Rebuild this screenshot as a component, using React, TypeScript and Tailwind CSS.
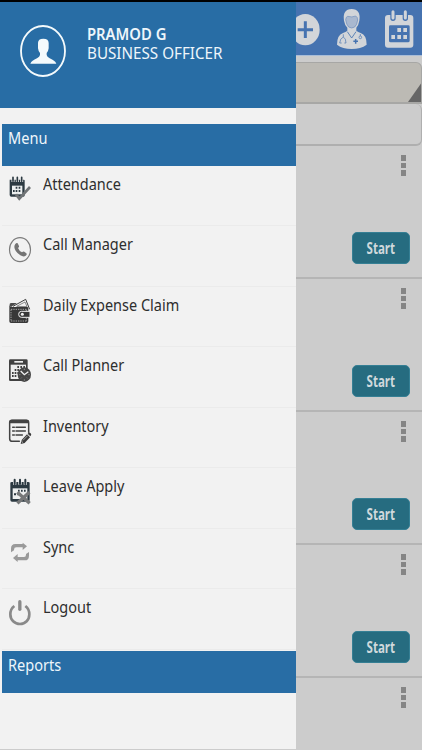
import type { ReactNode } from 'react';

interface MenuItem {
  label: string;
  icon: ReactNode;
}

function AttendanceIcon() {
  return (
    <svg viewBox="0 0 72 84" className="h-7 w-6 shrink-0">
      <path d="M5 14h42q3 0 3 3v44q0 4-4 4H10q-5 0-5-5z" fill="#2c3a42" />
      <path d="M12 32h31v26H12z" fill="#ecefef" />
      <path d="M23 35h5v6h-5zM32 35h5v6h-5zM15 45h5v6h-5zM23 45h5v6h-5zM32 45h5v6h-5z" fill="#2c3a42" />
      <path d="M15 8v13M28 8v13M41 8v13" stroke="#f2f2f2" strokeWidth="9" />
      <path d="M15 7v12M28 7v12M41 7v12" stroke="#2c3a42" strokeWidth="5" strokeLinecap="round" />
      <path d="M24 58l10 13L66 36" fill="none" stroke="#707476" strokeWidth="8" />
    </svg>
  );
}

function CallIcon() {
  return (
    <svg viewBox="0 0 72 84" className="h-7 w-6 shrink-0">
      <ellipse cx="36" cy="44" rx="31.500" ry="36" fill="none" stroke="#7b7b7b" strokeWidth="3.500" />
      <path
        d="M22 27q4-5 7-2l4 8q1 3-3 6 4 10 12 13 4-4 7-2l6 5q3 3-2 7-6 5-16-1Q20 50 19 36q0-6 3-9z"
        fill="#747474"
      />
    </svg>
  );
}

function WalletIcon() {
  return (
    <svg viewBox="0 0 72 84" className="h-7 w-6 shrink-0">
      <path d="M15 31L53 10l12 30" fill="none" stroke="#3f3f3f" strokeWidth="3" />
      <path d="M5 29V24q1-3 5-3h17L10 32z" fill="#4a4a4a" />
      <path d="M26 31l25-13 6 14z" fill="#f2f2f2" stroke="#555" strokeWidth="2" />
      <path d="M4 28q3 5 9 5h44q4 0 4 4v39q0 5-5 5H9q-5 0-5-5z" fill="#383838" />
      <path d="M9 40h46M9 75h46M9 41v34M55 41v7M55 66v9" fill="none" stroke="#d8d8d8" strokeWidth="2" strokeDasharray="4 3" />
      <path d="M66 46H40q-8 0-8 9t8 9h26z" fill="#383838" stroke="#f2f2f2" strokeWidth="3" />
      <circle cx="43" cy="55" r="4.500" fill="#f2f2f2" />
    </svg>
  );
}

function PlannerIcon() {
  return (
    <svg viewBox="0 0 72 84" className="h-7 w-6 shrink-0">
      <path d="M3 14q0-4 4-4h48q4 0 4 4v57q0 4-4 4H7q-4 0-4-4z" fill="#414141" />
      <path d="M8 26h46v43H8z" fill="#eee" />
      <path d="M19 15h26v5H19z" fill="#eee" />
      <path
        d="M28 30h5v6h-5zM37 30h5v6h-5zM46 30h5v6h-5zM20 39h5v6h-5zM28 39h5v6h-5zM37 39h5v6h-5zM12 48h5v6h-5zM20 48h5v6h-5zM28 48h5v6h-5zM12 57h5v6h-5zM20 57h5v6h-5z"
        fill="#414141"
      />
      <ellipse cx="49" cy="56" rx="20" ry="22" fill="#454545" />
      <path d="M38 45l11 11 12-9" fill="none" stroke="#f2f2f2" strokeWidth="4" />
      <path d="M49 38v4M49 70v4M34 56h3M61 56h4M39 67l2-2M59 67l-2-2" stroke="#bbb" strokeWidth="2" />
    </svg>
  );
}

function InventoryIcon() {
  return (
    <svg viewBox="0 0 72 84" className="h-7 w-6 shrink-0">
      <path
        d="M34 73H13q-8 0-8-8V17q0-7 7-7h43q7 0 7 7v29"
        fill="none"
        stroke="#434343"
        strokeWidth="4.500"
        strokeLinecap="round"
      />
      <path d="M4 19v-4q0-7 8-7h43q8 0 8 7v4z" fill="#434343" />
      <path d="M14 31h5M14 42h5M14 54h5M24 31h28M24 42h28M24 54h19" stroke="#434343" strokeWidth="4.500" strokeLinecap="round" />
      <path d="M41 69l16-17 9 9-16 17-12 3z" fill="#3c3c3c" />
      <path d="M59 50l3-3q3-2 6 2t1 6l-2 3z" fill="#3c3c3c" />
      <path d="M45 70l14-14" stroke="#ddd" strokeWidth="2" />
      <path d="M41 73l4 4" stroke="#f2f2f2" strokeWidth="2" />
    </svg>
  );
}

function LeaveIcon() {
  return (
    <svg viewBox="0 0 72 84" className="h-7 w-6 shrink-0">
      <path d="M7 18q0-3 4-3h50q4 0 4 3v51q0 5-5 5H12q-5 0-5-5z" fill="#2c3a42" />
      <path d="M14 34h44v32H14z" fill="#ecefef" />
      <path d="M30 38h5v6h-5zM39 38h5v6h-5zM48 38h5v6h-5zM18 49h6v6h-6zM28 49h6v6h-6z" fill="#2c3a42" />
      <path d="M20 8v15M36 8v15M52 8v15" stroke="#f2f2f2" strokeWidth="10" />
      <path d="M20 8v13M36 8v13M52 8v13" stroke="#2c3a42" strokeWidth="6" strokeLinecap="round" />
      <path d="M28 46l37 33M64 46L28 79" stroke="#767879" strokeWidth="10" />
    </svg>
  );
}

function SyncIcon() {
  return (
    <svg viewBox="0 0 72 84" className="h-7 w-6 shrink-0">
      <g fill="#9a9a9a">
        <path d="M9 43V32q0-14 13-14h22v-4l13 11-13 11v-8H25q-7 0-7 7v2z" />
        <path d="M63 42v11q0 14-13 14H29v5L15 60l14-12v9h19q6 0 6-7v-2z" />
      </g>
    </svg>
  );
}

function LogoutIcon() {
  return (
    <svg viewBox="0 0 72 84" className="h-7 w-6 shrink-0">
      <path d="M19 24Q7 33 7 49c0 17 13 29 29 29s28-12 28-29q0-16-12-25" fill="none" stroke="#8a8a8a" strokeWidth="8" />
      <path d="M35.500 11v23" stroke="#8a8a8a" strokeWidth="10" strokeLinecap="round" />
    </svg>
  );
}

const MENU: MenuItem[] = [
  { label: 'Attendance', icon: <AttendanceIcon /> },
  { label: 'Call Manager', icon: <CallIcon /> },
  { label: 'Daily Expense Claim', icon: <WalletIcon /> },
  { label: 'Call Planner', icon: <PlannerIcon /> },
  { label: 'Inventory', icon: <InventoryIcon /> },
  { label: 'Leave Apply', icon: <LeaveIcon /> },
  { label: 'Sync', icon: <SyncIcon /> },
  { label: 'Logout', icon: <LogoutIcon /> },
];

function SectionBar({ title }: { title: string }) {
  return (
    <div className="ml-[2px] h-[42px] shrink-0 bg-[#286da5] pl-[6px] pt-[3px] text-[16px] leading-[22px] text-[#eef6fb]">
      <span className="inline-block origin-left scale-x-[0.91]">{title}</span>
    </div>
  );
}

function Drawer() {
  return (
    <aside className="absolute left-0 top-0 flex h-[749px] w-[295.5px] flex-col bg-[#f2f2f2]">
      <div className="flex h-[107.5px] shrink-0 border-t-[2px] border-black bg-[#286da5] pl-5 text-[#eef6fb]">
        <svg viewBox="0 0 138 156" className="mt-[23px] h-[52px] w-[46px] shrink-0">
          <ellipse cx="69" cy="78" rx="66" ry="75" fill="none" stroke="#f4fafc" strokeWidth="5.500" />
          <path
            d="M54 54q0-13 16-13t16 13v16q-1 9-6 14v6q1 6 9 10 16 7 20 16H31q4-9 20-16 8-4 9-10v-6q-5-5-6-14z"
            fill="#f4fafc"
          />
        </svg>
        <div className="ml-[21px] mt-[23px] text-[16px] leading-[19px]">
          <p className="origin-left scale-x-[0.925] font-semibold">PRAMOD G</p>
          <p className="origin-left scale-x-[0.95]">BUSINESS OFFICER</p>
        </div>
      </div>
      <div className="h-4 shrink-0" />
      <SectionBar title="Menu" />
      <ul className="ml-[2px]">
        {MENU.map((item) => (
          <li
            key={item.label}
            className="flex h-[60.5px] border-b border-[#ebebeb] pl-[6px] pt-[9px] text-[16px] leading-[18px] text-[#2e2e2e]"
          >
            {item.icon}
            <span className="ml-[11px] origin-left self-start scale-x-[0.905]">{item.label}</span>
          </li>
        ))}
      </ul>
      <div className="h-[1.5px] shrink-0" />
      <SectionBar title="Reports" />
    </aside>
  );
}

function TopBar() {
  return (
    <header className="flex h-[55px] shrink-0 justify-end border-t-[2px] border-black bg-[#4673b0]">
      <svg viewBox="0 6 426 159" className="h-[53px] w-[142px]">
        <g fill="#d2d5d9">
          <ellipse cx="76" cy="89" rx="43" ry="47" />
          <path d="M192 62q-5-35 23-35t23 35q-2 13-9 21v9q5 4 13 7 18 6 18 35-18 13-45 13t-44-13q0-29 18-35 8-3 13-7v-9q-8-8-10-21z" />
          <path d="M315 54q0-9 9-9h67q9 0 9 9v80q0 9-9 9h-67q-9 0-9-9z" />
        </g>
        <path d="M76 64v50M53 89h46" stroke="#4673b0" strokeWidth="9" />
        <path
          d="M197 59q1-9 6-10 13 4 24-1 6 3 6 12-2 15-9 21-9 6-18 0-7-7-9-22z"
          fill="#a9b8cf"
          stroke="#6d8dbb"
          strokeWidth="2"
        />
        <g fill="none" stroke="#4673b0" strokeWidth="2.500">
          <path d="M202 95l13 19 13-19" />
          <path d="M190 103v8q-10 4-11 18h6M193 129h5q0-14-8-18M241 102v6" strokeWidth="2" />
          <circle cx="241" cy="112" r="4" strokeWidth="2" />
        </g>
        <path d="M227 117v14M220 124h14" stroke="#4673b0" strokeWidth="4.500" />
        <path d="M339 36v19M376 36v19" stroke="#4673b0" strokeWidth="16" strokeLinecap="round" />
        <path d="M339 35v19M376 35v19" stroke="#d2d5d9" strokeWidth="9" strokeLinecap="round" />
        <path d="M327 80q0-4 4-4h54q4 0 4 4v42q0 5-5 5h-52q-5 0-5-5z" fill="#4673b0" />
        <path
          d="M352 84h11v12h-11zM370 84h11v12h-11zM334 105h11v12h-11zM352 105h11v12h-11zM370 105h11v12h-11z"
          fill="#d2d5d9"
        />
      </svg>
    </header>
  );
}

function KebabIcon() {
  return (
    <div className="mr-[4px] mt-[9px] flex flex-col gap-[2px]">
      <span className="h-[5.5px] w-[5px] bg-[#858585]" />
      <span className="h-[5.5px] w-[5px] bg-[#858585]" />
      <span className="h-[5.5px] w-[5px] bg-[#858585]" />
    </div>
  );
}

function CallRow() {
  return (
    <div className="flex h-[133px] shrink-0 flex-col items-end border-b-2 border-[#b5b5b5] pr-3">
      <KebabIcon />
      <button className="mt-[56px] h-8 w-[58px] rounded-[5px] border border-[#357f94] bg-[#266c80] font-['Open_Sans',sans-serif] text-[16px] font-bold text-[#d0d9dc]">
        <span className="inline-block scale-x-[0.72]">Start</span>
      </button>
    </div>
  );
}

export default function App() {
  return (
    <div className="relative flex h-[750px] w-[422px] flex-col overflow-hidden bg-[#cccccc] font-['Noto_Sans',sans-serif]">
      <TopBar />
      <div className="h-px shrink-0 bg-[#a9bdd8]" />
      <div className="relative mt-[6px] h-[42px] shrink-0 overflow-hidden rounded-tr-[6px] border border-b-2 border-[#a7a7a5] bg-[#bcbab4]">
        <svg viewBox="0 0 14 20" className="absolute bottom-0 right-[-1px] h-5 w-[14px]">
          <path d="M0 20L14 0v20z" fill="#666" />
        </svg>
      </div>
      <div className="h-[42px] shrink-0 rounded-r-[6px] border border-b-2 border-t-0 border-[#afafaf]" />
      {[0, 1, 2, 3].map((n) => (
        <CallRow key={n} />
      ))}
      <div className="flex flex-col items-end pr-3">
        <KebabIcon />
      </div>
      <Drawer />
    </div>
  );
}
